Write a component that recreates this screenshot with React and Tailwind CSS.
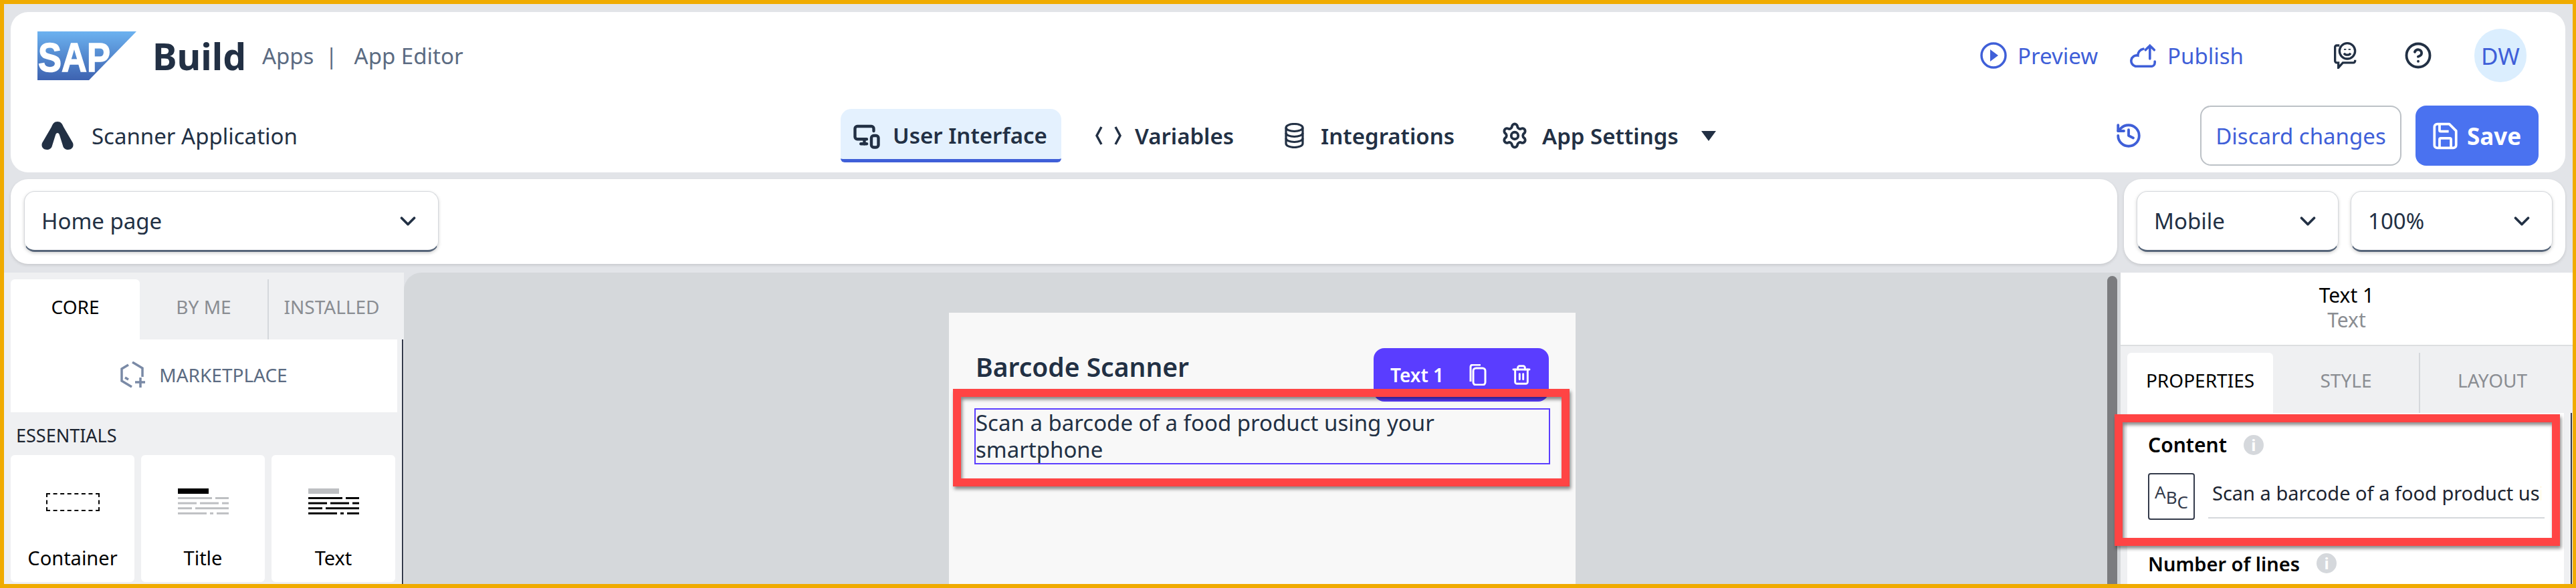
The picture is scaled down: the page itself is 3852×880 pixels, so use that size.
import {CircleHelp, History, MonitorSmartphone, Settings, Trash2, ChevronDown} from "lucide-react";

const Logo = () => (
    <svg width="148" height="73" viewBox="0 0 148 73" className="shrink-0">
        <defs>
            <linearGradient id="sapGrad" x1="0" y1="0" x2="0" y2="1">
                <stop offset="0" stopColor="#6cb2f0"/>
                <stop offset="1" stopColor="#3d62b0"/>
            </linearGradient>
        </defs>
        <polygon points="0,0 148,0 77,73 0,73" fill="url(#sapGrad)"/>
        <text x="1" y="60" fill="#fff" stroke="#fff" strokeWidth="1.500" fontFamily="Liberation Sans" fontWeight="700" fontSize="62" textLength="108" lengthAdjust="spacingAndGlyphs">SAP</text>
    </svg>
);

const AppIcon = () => (
    <svg width="48" height="42" viewBox="0 0 48 42" className="shrink-0">
        <path fill="#223044" d="M24 0C29 0 31 3 33 8L47 32C49 38 45 42 40 42C36 42 33 40 32 36L27 20C26 16 22 16 21 20L16 36C15 40 12 42 8 42C3 42 -1 38 1 32L15 8C17 3 19 0 24 0Z"/>
    </svg>
);

const Select = ({label, width, pad}) => (
    <div className={`flex items-center justify-between h-[91px] bg-white rounded-2xl border border-[#d5d8dc] border-b-[3px] border-b-[#566579] shadow-[0_2px_5px_rgba(0,0,0,0.18)] pl-[25px] text-[33px] leading-none text-[#223044] ${width} ${pad}`}>
        <span>{label}</span>
        <ChevronDown size={38} strokeWidth={2.4} color="#223044"/>
    </div>
);

const TabLabel = ({active, children}) => (
    <span className={`text-[28px] leading-none ${active ? "text-black" : "text-[#8a8d92]"}`}>{children}</span>
);

const LineIcon = ({head, lines}) => {
    const rows = [[[0, 51], [56, 76]], [[0, 28], [33, 61], [66, 76]], [[0, 21], [26, 76]], [[0, 43], [48, 53], [58, 76]]];
    return (
        <svg width="76" height="40" viewBox="0 0 76 40">
            <rect x="0" y="0" width="46" height="8" fill={head}/>
            {rows.map((row, i) => row.map(([a, b]) => (
                <rect key={`${i}-${a}`} x={a} y={13 + i * 7.6} width={b - a} height="3" fill={lines}/>
            )))}
        </svg>
    );
};

const Tile = ({label, children}) => (
    <div className="flex flex-col items-center w-[185px] h-[190px] bg-white rounded-md">
        <div className="flex items-center justify-center h-[130px] pt-[10px]">{children}</div>
        <span className="mt-[9px] text-[29px] leading-none text-black">{label}</span>
    </div>
);

const InfoDot = () => (
    <span className="flex items-center justify-center w-[30px] h-[30px] rounded-full bg-[#d5d8dc] text-white text-[24px] font-bold leading-none">i</span>
);

const RedBox = ({className}) => (
    <div className={`absolute border-[12px] border-[#ff4444] shadow-[2px_4px_5px_rgba(0,0,0,0.45),inset_2px_4px_5px_rgba(0,0,0,0.45)] ${className}`}/>
);

const App = () => {
    return (
        <div className="flex flex-col w-[3852px] h-[880px] overflow-hidden bg-[#e2e4e8] border-t-[6px] border-l-[6px] border-r-[5px] border-b-[6px] border-[#f0ab00] font-['Noto_Sans',sans-serif]">
            {/* top bar */}
            <div className="flex flex-col shrink-0 h-[240px] mt-[12px] ml-[10px] mr-[11px] bg-white rounded-[26px]">
                <div className="flex items-center h-[130px] pl-[40px] pr-[58px]">
                    <Logo/>
                    <span className="ml-[24px] text-[55px] font-bold leading-none text-[#223044]">Build</span>
                    <span className="ml-[24px] text-[33px] leading-none text-[#5b6b82]">Apps</span>
                    <span className="ml-[17px] text-[33px] leading-none text-[#5b6b82]">|</span>
                    <span className="ml-[25px] text-[33px] leading-none text-[#5b6b82]">App Editor</span>
                    <div className="flex items-center ml-auto text-[#3f5fd8] text-[33px] leading-none">
                        <svg width="40" height="40" viewBox="0 0 40 40" fill="none" stroke="currentColor" strokeWidth="3.500">
                            <circle cx="20" cy="20" r="18"/>
                            <path d="M15 11l12 9-12 9z" fill="currentColor" stroke="none"/>
                        </svg>
                        <span className="ml-[16px]">Preview</span>
                        <svg width="40" height="36" viewBox="0 0 24 22" fill="none" stroke="currentColor" strokeWidth="2.200" strokeLinecap="round" className="ml-[48px]">
                            <path d="M12 5A6 6 0 0 0 7 11A5 5 0 0 0 5 21h14a3.500 3.500 0 0 0 3.500-3.500v-1"/>
                            <path d="M18 14V2M14 6l4-4 4 4"/>
                        </svg>
                        <span className="ml-[16px]">Publish</span>
                    </div>
                    <svg width="40" height="40" viewBox="0 0 24 24" fill="none" stroke="#223044" strokeWidth="2" className="ml-[130px]">
                        <path d="M8 3H5.5A1.5 1.5 0 0 0 4 4.5V17a1.5 1.5 0 0 0 1.5 1.500H7V23l4-4.500h9.500a1.500 1.500 0 0 0 1.500-1.500v-1"/>
                        <circle cx="15" cy="8" r="7"/>
                        <path d="M12 10c1.500 2 4.500 2 6 0"/>
                        <path d="M13 6v1M17 6v1"/>
                    </svg>
                    <CircleHelp size={42} strokeWidth={2.2} color="#223044" className="ml-[70px]"/>
                    <span className="flex items-center justify-center w-[78px] h-[80px] ml-[63px] rounded-full bg-[#dbeefe] text-[#3f5fd8] text-[35px] leading-none">DW</span>
                </div>
                <div className="flex items-start h-[110px]">
                    <div className="flex items-center w-[1241px] h-[110px] pl-[46px] shrink-0">
                        <AppIcon/>
                        <span className="ml-[27px] text-[33px] leading-none text-[#223044]">Scanner Application</span>
                    </div>
                    <div className="flex items-center h-[80px] mt-[15px] text-[33px] font-semibold leading-none text-[#223044]">
                        <div className="flex items-center w-[330px] h-[80px] pl-[18px] pt-[4px] bg-[#e4f1fe] rounded-t-2xl rounded-b-md border-b-[5px] border-[#3f5fd8]">
                            <MonitorSmartphone size={42} strokeWidth={2.5}/>
                            <span className="ml-[18px]">User Interface</span>
                        </div>
                        <svg width="41" height="30" viewBox="0 0 41 30" fill="none" stroke="#223044" strokeWidth="3.500" className="ml-[50px]">
                            <path d="M10 2L3 15l7 13M31 2l7 13-7 13"/>
                        </svg>
                        <span className="ml-[19px]">Variables</span>
                        <svg width="29" height="38" viewBox="0 0 29 38" fill="none" stroke="#223044" strokeWidth="3.200" className="ml-[76px]">
                            <ellipse cx="14.500" cy="7" rx="12.500" ry="5.500"/>
                            <path d="M2 7v24c0 3 5.500 5.500 12.500 5.500S27 34 27 31V7"/>
                            <path d="M2 15c0 3 5.500 5.500 12.500 5.500S27 18 27 15M2 23c0 3 5.500 5.500 12.500 5.500S27 26 27 23"/>
                        </svg>
                        <span className="ml-[25px]">Integrations</span>
                        <Settings size={42} strokeWidth={2.2} className="ml-[69px]"/>
                        <span className="ml-[20px]">App Settings</span>
                        <span className="ml-[34px] w-0 h-0 border-l-[11px] border-r-[11px] border-t-[15px] border-l-transparent border-r-transparent border-t-[#223044]"/>
                    </div>
                    <div className="flex items-center h-[90px] mt-[10px] ml-auto pr-[40px]">
                        <History size={42} strokeWidth={2.2} color="#3f5fd8"/>
                        <div className="flex items-center justify-center w-[301px] h-[90px] ml-[86px] rounded-2xl border-2 border-[#bcc1c6] text-[#3f5fd8] text-[33px] leading-none">Discard changes</div>
                        <div className="flex items-center w-[184px] h-[90px] ml-[21px] pl-[24px] rounded-2xl bg-[#4a72f0] text-white text-[35px] font-bold leading-none">
                            <svg width="41" height="41" viewBox="0 0 24 24" fill="none" stroke="currentColor" strokeWidth="2.200" strokeLinejoin="round">
                                <path d="M5 1.500h10.500l6 6V20a2.500 2.500 0 0 1-2.500 2.500H5A2.500 2.500 0 0 1 2.500 20V4A2.500 2.500 0 0 1 5 1.500z"/>
                                <path d="M7 2v5a1 1 0 0 0 1 1h7"/>
                                <path d="M7 22v-7a1 1 0 0 1 1-1h8a1 1 0 0 1 1 1v7"/>
                            </svg>
                            <span className="ml-[12px]">Save</span>
                        </div>
                    </div>
                </div>
            </div>

            {/* page and device selects */}
            <div className="flex shrink-0 h-[127px] mt-[10px] ml-[10px] mr-[11px] gap-[10px]">
                <div className="flex items-center flex-1 pl-[20px] bg-white rounded-[26px] shadow-[0_2px_4px_rgba(0,0,0,0.12)]">
                    <Select label="Home page" width="w-[620px]" pad="pr-[26px]"/>
                </div>
                <div className="flex items-center gap-[18px] w-[660px] pl-[19px] bg-white rounded-[26px] shadow-[0_2px_4px_rgba(0,0,0,0.12)]">
                    <Select label="Mobile" width="w-[302px]" pad="pr-[26px]"/>
                    <Select label="100%" width="w-[302px]" pad="pr-[26px]"/>
                </div>
            </div>

            <div className="flex flex-1 min-h-0 mt-[13px]">
                {/* component library */}
                <div className="flex flex-col w-[598px] shrink-0 bg-[#eff0f2]">
                    <div className="flex h-[100px] pt-[10px] pl-[10px] shrink-0">
                        <div className="flex items-center justify-center w-[193px] pb-[8px] bg-white rounded-t-md"><TabLabel active>CORE</TabLabel></div>
                        <div className="flex items-center justify-center w-[193px] pb-[8px] border-r-2 border-[#d5d8dc]"><TabLabel>BY ME</TabLabel></div>
                        <div className="flex items-center justify-center w-[188px] pb-[8px]"><TabLabel>INSTALLED</TabLabel></div>
                    </div>
                    <div className="flex flex-1 min-h-0 border-r-2 border-[#333a4a] mr-[1px]">
                        <div className="flex flex-col flex-1 min-w-0 pl-[10px]">
                            <div className="flex items-center justify-center shrink-0 w-[578px] h-[109px] pb-[3px] bg-white">
                                <svg width="38" height="40" viewBox="0 0 38 40" fill="none" stroke="#7a8aa6" strokeWidth="3.500" className="mr-[20px]">
                                    <path d="M18 1l15 9v13M12 5L2 11v18l15 9M7 24l5 3M30 24v15M22 31h15"/>
                                </svg>
                                <span className="text-[28px] leading-none text-[#5b6b82]">MARKETPLACE</span>
                            </div>
                            <div className="flex items-center h-[64px] pl-[8px] pt-[4px] shrink-0 text-[27px] leading-none text-[#1c2430]">ESSENTIALS</div>
                            <div className="flex gap-[10px]">
                                <Tile label="Container">
                                    <div className="w-[80px] h-[27px] border-2 border-dashed border-black"/>
                                </Tile>
                                <Tile label="Title"><LineIcon head="#000" lines="#bdbfc2"/></Tile>
                                <Tile label="Text"><LineIcon head="#bdbfc2" lines="#000"/></Tile>
                            </div>
                        </div>
                    </div>
                </div>

                {/* canvas */}
                <div className="relative flex flex-1 min-w-0 pl-[815px] pt-[60px] bg-[#d5d8db] rounded-tl-[26px]">
                    <div className="relative flex flex-col w-[937px] bg-[#f8f8f8]">
                        <div className="flex justify-between h-[143px] pl-[40px] pr-[40px] pt-[53px]">
                            <span className="text-[39px] font-semibold leading-[56px] text-[#223044]">Barcode Scanner</span>
                            <div className="flex items-center w-[262px] h-[80px] pl-[25px] rounded-2xl bg-[#5a3dff] text-white text-[28px] font-semibold leading-none">
                                <span>Text 1</span>
                                <svg width="28" height="32" viewBox="0 0 28 32" fill="none" stroke="#fff" strokeWidth="3" className="ml-[36px]">
                                    <path d="M4 26V4a3 3 0 0 1 3-3h12"/>
                                    <rect x="8" y="6" width="18" height="25" rx="4"/>
                                </svg>
                                <Trash2 size={32} strokeWidth={2.2} className="ml-[36px]"/>
                            </div>
                        </div>
                        <div className="ml-[38px] w-[861px] h-[84px] border-2 border-[#5a3dff] text-[33px] leading-[40px] text-[#223044]">
                            Scan a barcode of a food product using your smartphone
                        </div>
                        <RedBox className="left-[6px] top-[114px] w-[922px] h-[146px]"/>
                    </div>
                    <div className="absolute top-[5px] right-[5px] w-[15px] h-full rounded-t-full bg-[#7b7c7f]"/>
                </div>

                {/* properties panel */}
                <div className="relative flex flex-col w-[676px] shrink-0 bg-[#eff0f2]">
                    <div className="flex flex-col items-center justify-center shrink-0 h-[110px] bg-white border-b-2 border-[#dcdee0] pb-[4px]">
                        <span className="text-[30px] leading-[37px] text-black">Text 1</span>
                        <span className="text-[30px] leading-[37px] text-[#8a8d92]">Text</span>
                    </div>
                    <div className="flex h-[100px] pt-[10px] pl-[10px] shrink-0">
                        <div className="flex items-center justify-center w-[218px] pb-[8px] bg-white rounded-t-md"><TabLabel active>PROPERTIES</TabLabel></div>
                        <div className="flex items-center justify-center w-[220px] pb-[8px] border-r-2 border-[#d5d8dc]"><TabLabel>STYLE</TabLabel></div>
                        <div className="flex items-center justify-center w-[216px] pb-[8px]"><TabLabel>LAYOUT</TabLabel></div>
                    </div>
                    <div className="flex flex-1 min-h-0 border-r-2 border-[#333a4a] mr-[1px]">
                        <div className="flex flex-col w-[653px] ml-[10px] pl-[31px] bg-white">
                            <div className="flex items-center gap-[25px] h-[30px] mt-[33px] text-[30px] font-semibold leading-none text-black">
                                <span>Content</span>
                                <InfoDot/>
                            </div>
                            <div className="flex mt-[27px]">
                                <div className="flex w-[70px] h-[70px] shrink-0 items-center justify-center rounded-[4px] border-2 border-[#333a4a] text-[#333a4a] text-[26px] leading-none">
                                    <span className="-mt-[14px]">A</span><span className="mt-[2px]">B</span><span className="mt-[16px]">C</span>
                                </div>
                                <div className="w-[503px] h-[68px] ml-[20px] pl-[6px] border-b-2 border-[#d5d8dc]">
                                    <div className="w-[492px] text-[29px] leading-[60px] text-[#1c2430] whitespace-nowrap overflow-hidden">
                                        Scan a barcode of a food product using your smartphone
                                    </div>
                                </div>
                            </div>
                            <div className="flex items-center gap-[25px] h-[30px] mt-[50px] text-[29px] font-semibold leading-none text-black">
                                <span>Number of lines</span>
                                <InfoDot/>
                            </div>
                        </div>
                    </div>
                    <RedBox className="left-[-9px] top-[212px] w-[666px] h-[197px]"/>
                </div>
            </div>
        </div>
    );
};

export default App;
